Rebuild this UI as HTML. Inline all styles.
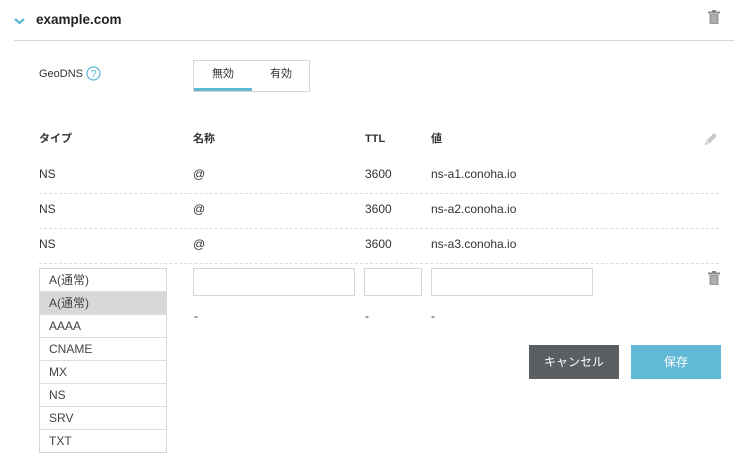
<!DOCTYPE html>
<html><head><meta charset="utf-8"><style>
body{margin:0;width:742px;height:463px;background:#fff;font-family:"Liberation Sans","Noto Sans CJK JP",sans-serif;color:#333;position:relative;overflow:hidden}
.a{position:absolute;white-space:nowrap;line-height:16px}
.t{font-size:12px}
.h{font-size:11px;font-weight:bold}
.dash{position:absolute;left:39px;width:680px;border-top:1px dashed #ddd;height:0}
.inp{position:absolute;top:268px;height:28px;border:1px solid #d6d6d6;box-sizing:border-box}
.list{position:absolute;left:39px;top:268px;width:128px;border:1px solid #d6d6d6;box-sizing:border-box}
.list div{height:22px;line-height:22px;padding-left:9px;font-size:12px;border-top:1px solid #ddd;color:#444}
.list div:first-child{border-top:none}
.btn{position:absolute;top:345px;height:34px;width:90px;color:#fff;font-size:12px;text-align:center;line-height:34px}
</style></head><body>
<svg class="a" style="left:14px;top:17px" width="11" height="8" viewBox="0 0 11 8"><path d="M1 2 L5.5 6 L10 2" stroke="#5fb7d6" stroke-width="2.2" fill="none"/></svg>
<div class="a" style="left:36px;top:12px;font-size:13.5px;font-weight:bold;color:#222">example.com</div>
<svg class="a" style="left:708px;top:10px" width="12" height="14" viewBox="0 0 12 14"><rect x="0" y="1.5" width="12" height="2" fill="#888"/><rect x="4" y="0" width="4" height="2" fill="#888"/><rect x="1.5" y="4" width="9" height="10" fill="#999"/><path d="M4 5v8M6 5v8M8 5v8" stroke="#ccc" stroke-width="0.8"/></svg>
<div class="a" style="left:14px;top:40px;width:720px;height:1px;background:#d9d9d9"></div>
<div class="a" style="left:39px;top:66px;font-size:11px">GeoDNS</div>
<svg class="a" style="left:86px;top:66px" width="15" height="15" viewBox="0 0 15 15"><circle cx="7.5" cy="7.5" r="6.5" fill="none" stroke="#5fb7d6" stroke-width="1.2"/><text x="7.5" y="11.5" font-size="11" text-anchor="middle" fill="#5fb7d6" font-family="Liberation Sans">?</text></svg>
<div class="a" style="left:193px;top:60px;width:117px;height:32px;border:1px solid #d6d6d6;box-sizing:border-box"></div>
<div class="a" style="left:194px;top:88px;width:58px;height:3px;background:#5fb7d6"></div>
<div class="a" style="left:212px;top:66px;font-size:11px">無効</div>
<div class="a" style="left:270px;top:66px;font-size:11px">有効</div>
<div class="a h" style="left:39px;top:131px">タイプ</div>
<div class="a h" style="left:193px;top:131px">名称</div>
<div class="a h" style="left:365px;top:131px">TTL</div>
<div class="a h" style="left:431px;top:131px">値</div>
<svg class="a" style="left:703px;top:131px" width="16" height="16" viewBox="0 0 16 16"><path d="M2 14 L3 10 L11 2 L14 5 L6 13 Z" fill="#c8c8c8"/><path d="M3 10 L6 13" stroke="#fff" stroke-width="1"/></svg>
<div class="a t" style="left:39px;top:166px">NS</div><div class="a t" style="left:193px;top:166px">@</div><div class="a t" style="left:365px;top:166px">3600</div><div class="a t" style="left:431px;top:166px">ns-a1.conoha.io</div>
<div class="dash" style="top:193px"></div>
<div class="a t" style="left:39px;top:201px">NS</div><div class="a t" style="left:193px;top:201px">@</div><div class="a t" style="left:365px;top:201px">3600</div><div class="a t" style="left:431px;top:201px">ns-a2.conoha.io</div>
<div class="dash" style="top:228px"></div>
<div class="a t" style="left:39px;top:236px">NS</div><div class="a t" style="left:193px;top:236px">@</div><div class="a t" style="left:365px;top:236px">3600</div><div class="a t" style="left:431px;top:236px">ns-a3.conoha.io</div>
<div class="dash" style="top:263px"></div>
<div class="list"><div>A(通常)</div><div style="background:#d8d8d8">A(通常)</div><div>AAAA</div><div>CNAME</div><div>MX</div><div>NS</div><div>SRV</div><div>TXT</div></div>
<div class="inp" style="left:193px;width:162px"></div>
<div class="inp" style="left:364px;width:58px"></div>
<div class="inp" style="left:431px;width:162px"></div>
<svg class="a" style="left:708px;top:271px" width="12" height="14" viewBox="0 0 12 14"><rect x="0" y="1.5" width="12" height="2" fill="#888"/><rect x="4" y="0" width="4" height="2" fill="#888"/><rect x="1.5" y="4" width="9" height="10" fill="#999"/><path d="M4 5v8M6 5v8M8 5v8" stroke="#ccc" stroke-width="0.8"/></svg>
<div class="a t" style="left:194px;top:308px">-</div><div class="a t" style="left:365px;top:308px">-</div><div class="a t" style="left:431px;top:308px">-</div>
<div class="btn" style="left:529px;background:#5a5f62">キャンセル</div>
<div class="btn" style="left:631px;background:#62b8d7">保存</div>
</body></html>
